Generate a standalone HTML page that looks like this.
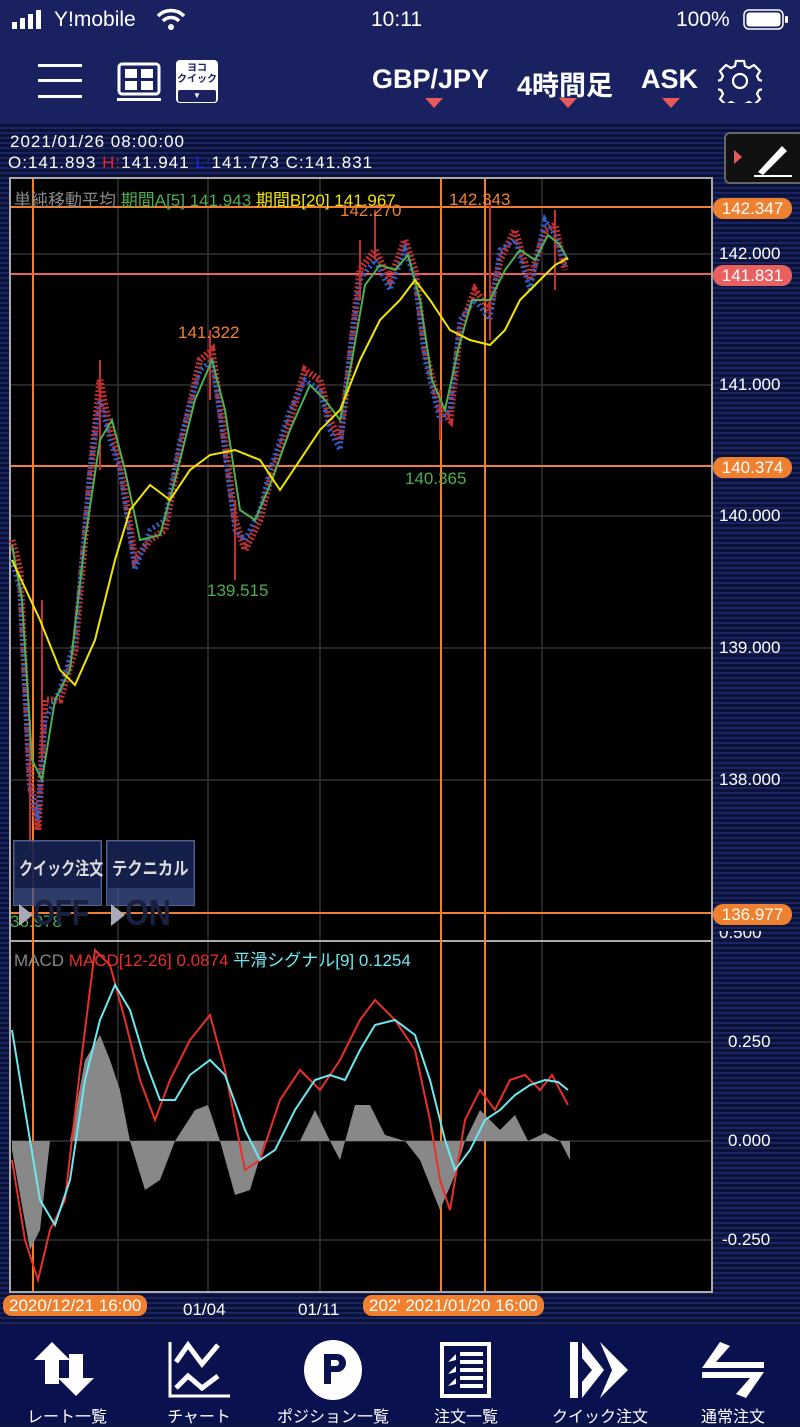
<!DOCTYPE html>
<html><head><meta charset="utf-8">
<style>
*{margin:0;padding:0;box-sizing:border-box}
body{width:800px;height:1422px;overflow:hidden;background:#0d1547;font-family:"Liberation Sans","Noto Sans CJK JP",sans-serif;color:#fff;position:relative}
.stripes{position:absolute;left:0;top:124px;width:800px;height:1202px;background:repeating-linear-gradient(#0b1238 0 3px,#1a2462 3px 5px)}
.top{position:absolute;left:0;top:0;width:800px;height:124px;background:#1a2160}
.abs{position:absolute;white-space:nowrap}
.pill{position:absolute;left:713px;width:79px;height:21px;border-radius:10px;font-size:17px;text-align:center;line-height:21px;color:#fff}
.ax{position:absolute;left:719px;font-size:17px;color:#fff}
.nav{position:absolute;left:0;top:1326px;width:800px;height:96px;background:#0a114f}
.nl{position:absolute;top:1403px;font-size:16px;color:#fff;transform:translateX(-50%);white-space:nowrap}
.dp{position:absolute;top:1295px;height:21px;background:#ee8030;border-radius:9px;font-size:17px;line-height:21px;padding:0 6px;color:#fff}
.cond{display:inline-block;transform-origin:0 0}
</style></head><body>
<div class="top"></div>
<div class="stripes"></div>
<!-- status bar -->
<svg class="abs" style="left:12px;top:10px" width="40" height="20"><rect x="0" y="12" width="5" height="7" fill="#fff"/><rect x="8" y="8" width="5" height="11" fill="#fff"/><rect x="16" y="4" width="5" height="15" fill="#fff"/><rect x="24" y="0" width="5" height="19" fill="#fff"/></svg>
<div class="abs" style="left:54px;top:8px;font-size:21px">Y!mobile</div>
<svg class="abs" style="left:156px;top:8px" width="30" height="22" viewBox="0 0 30 22"><path d="M2 8 A18 18 0 0 1 28 8" stroke="#fff" stroke-width="3.5" fill="none"/><path d="M7 13 A11 11 0 0 1 23 13" stroke="#fff" stroke-width="3.5" fill="none"/><circle cx="15" cy="19" r="3" fill="#fff"/></svg>
<div class="abs" style="left:371px;top:8px;font-size:21px">10:11</div>
<div class="abs" style="left:676px;top:8px;font-size:21px">100%</div>
<svg class="abs" style="left:743px;top:9px" width="46" height="22"><rect x="1" y="1" width="39" height="19" rx="5" stroke="#fff" stroke-width="1.5" fill="none"/><rect x="3.5" y="3.5" width="34" height="14" rx="3" fill="#fff"/><rect x="42" y="7" width="3" height="7" rx="1" fill="#fff"/></svg>
<!-- toolbar -->
<svg class="abs" style="left:38px;top:62px" width="44" height="38"><rect x="0" y="2" width="44" height="3" fill="#fff"/><rect x="0" y="17" width="44" height="3" fill="#fff"/><rect x="0" y="33" width="44" height="3" fill="#fff"/></svg>
<svg class="abs" style="left:117px;top:62px" width="46" height="40"><rect x="2" y="2" width="40" height="30" rx="3" stroke="#fff" stroke-width="3" fill="none"/><rect x="8" y="7" width="12" height="9" fill="#fff"/><rect x="24" y="7" width="12" height="9" fill="#fff"/><rect x="8" y="19" width="12" height="9" fill="#fff"/><rect x="24" y="19" width="12" height="9" fill="#fff"/><rect x="0" y="36" width="44" height="3" fill="#fff"/></svg>
<div class="abs" style="left:176px;top:60px;width:42px;height:43px;background:#fff;border-radius:4px;color:#1a2160;font-size:10px;font-weight:bold;text-align:center;line-height:11px;padding-top:3px">ヨコ<br>クイック<div style="margin:5px 2px 0;background:#1a2160;color:#fff;height:12px;font-size:8px;line-height:12px;border-radius:2px">▼</div></div>
<div class="abs" style="left:372px;top:64px;font-size:27px;font-weight:bold">GBP/JPY</div>
<div class="abs" style="left:517px;top:64px;font-size:27px;font-weight:bold">4時間足</div>
<div class="abs" style="left:641px;top:64px;font-size:27px;font-weight:bold">ASK</div>
<svg class="abs" style="left:424px;top:97px" width="20" height="12"><path d="M1 1H19L10 11Z" fill="#e85a5a"/></svg>
<svg class="abs" style="left:558px;top:97px" width="20" height="12"><path d="M1 1H19L10 11Z" fill="#e85a5a"/></svg>
<svg class="abs" style="left:661px;top:97px" width="20" height="12"><path d="M1 1H19L10 11Z" fill="#e85a5a"/></svg>
<svg class="abs" style="left:718px;top:59px" width="44" height="44" viewBox="0 0 44 44"><g transform="translate(22 22)" stroke="#fff" stroke-width="2.2" fill="none"><path d="M-4-20h8l1 5 4 2 5-3 6 6-3 5 2 4 5 1v8l-5 1-2 4 3 5-6 6-5-3-4 2-1 5h-8l-1-5-4-2-5 3-6-6 3-5-2-4-5-1v-8l5-1 2-4-3-5 6-6 5 3 4-2z"/><circle r="7"/></g></svg>
<!-- OHLC -->
<div class="abs" style="left:10px;top:132px;font-size:17px;letter-spacing:1px">2021/01/26 08:00:00</div>
<div class="abs" style="left:8px;top:153px;font-size:17px;letter-spacing:1px">O:141.893 <span style="color:#e22">H:</span>141.941 <span style="color:#22f">L:</span>141.773 C:141.831</div>
<div class="abs" style="left:724px;top:132px;width:80px;height:52px;background:#111;border:2px solid #666;border-radius:6px"></div>
<svg class="abs" style="left:730px;top:140px" width="66" height="40"><path d="M4 10L12 17L4 24Z" fill="#e85a5a"/><path d="M28 32L52 6L57 11L33 35Z" fill="#fff"/><path d="M24 36H62" stroke="#fff" stroke-width="2"/></svg>
<!-- chart -->
<svg class="abs" style="left:0;top:0" width="800" height="1422">
<rect x="10" y="178" width="702" height="1114" fill="#000" stroke="#aaa" stroke-width="2"/>
<g stroke="#333" stroke-width="1.5">
<path d="M118 179V1291M208 179V1291M320 179V1291M542 179V1291"/>
<path d="M11 254H711M11 385H711M11 516H711M11 648H711M11 780H711M11 1042H711M11 1141H711M11 1240H711"/>
</g>
<path d="M11 941H711" stroke="#aaa" stroke-width="2"/>
<g stroke="#ee8030" stroke-width="2"><path d="M33 179V1291M441 179V1291M485 179V1291"/><path d="M11 207H711M11 466H711M11 913H711"/></g>
<path d="M11 274H711" stroke="#e86060" stroke-width="2"/>
<polyline fill="none" stroke="#c03030" stroke-width="7" stroke-dasharray="2 2" points="12,540 20,570 30,780 38,830 45,700 60,700 75,650 90,480 100,380 110,430 120,460 135,560 150,540 165,530 180,450 200,360 212,350 222,420 235,520 245,550 260,520 270,480 290,420 305,370 320,380 330,420 340,440 350,360 360,270 375,250 390,280 405,240 415,270 425,350 440,410 450,420 460,330 475,290 490,310 500,260 515,230 530,280 545,230 555,225 565,270"/>
<polyline fill="none" stroke="#3060d0" stroke-width="5" stroke-dasharray="2 3" points="12,560 20,590 30,790 38,820 45,720 60,690 75,640 90,470 100,400 110,440 120,470 135,570 150,530 165,520 180,440 200,370 212,360 222,430 235,530 245,540 260,510 270,470 290,410 305,380 320,390 330,430 340,450 350,350 360,280 375,260 390,290 405,250 415,280 425,360 440,420 450,410 460,320 475,300 490,320 500,250 515,240 530,290 545,220 555,235 565,265"/>
<path d="M100 360V470M42 600V760M30 720V850M210 330V400M235 500V580M360 240V300M440 390V440M490 200V340M555 210V290M375 210V260" stroke="#c03030" stroke-width="2"/>
<polyline fill="none" stroke="#4caf50" stroke-width="2" points="12,545 22,600 32,760 42,780 55,700 70,670 85,540 100,440 112,420 125,470 140,540 160,535 175,480 195,400 212,360 225,410 240,510 255,520 270,485 290,430 310,385 325,400 340,420 352,360 365,285 380,265 395,270 408,255 420,300 432,380 445,410 458,350 472,300 490,300 505,270 520,250 535,260 548,235 560,245 568,260"/>
<polyline fill="none" stroke="#f2e600" stroke-width="2" points="12,560 40,620 60,670 75,685 95,640 115,560 130,510 150,485 170,500 190,470 210,455 235,450 260,460 280,490 300,460 320,430 340,410 360,360 380,320 400,300 415,280 430,300 450,330 470,340 490,345 505,330 520,300 540,280 555,265 568,258"/>
<path fill="#888" d="M12,1141 L12,1150 L30,1250 L40,1230 L50,1141 L70,1141 L85,1060 L100,1035 L110,1060 L120,1090 L130,1141 L145,1190 L160,1180 L175,1141 L195,1110 L208,1105 L220,1141 L235,1195 L250,1190 L265,1141 L300,1141 L315,1110 L330,1141 L340,1160 L355,1105 L370,1105 L385,1135 L405,1141 L420,1160 L440,1210 L455,1175 L465,1141 L480,1110 L500,1130 L515,1115 L528,1141 L545,1133 L560,1141 L570,1160 L570,1141 Z"/>
<polyline fill="none" stroke="#e8302a" stroke-width="2" points="12,1160 25,1240 38,1280 50,1230 65,1200 80,1070 95,950 110,965 125,1020 140,1080 155,1120 170,1080 190,1040 210,1015 225,1070 245,1170 260,1160 280,1100 300,1070 320,1090 340,1060 360,1020 375,1000 395,1020 415,1050 430,1120 440,1180 450,1210 465,1120 480,1090 495,1110 510,1080 525,1075 540,1090 552,1075 568,1105"/>
<polyline fill="none" stroke="#6ee8f0" stroke-width="2" points="12,1030 25,1110 40,1200 55,1225 70,1180 85,1080 100,1020 115,985 130,1010 145,1060 160,1100 175,1100 190,1075 210,1060 225,1075 245,1130 260,1160 275,1150 295,1110 315,1080 330,1075 345,1080 360,1050 375,1025 395,1020 415,1035 430,1080 445,1140 455,1170 470,1150 485,1120 500,1110 515,1095 530,1085 545,1080 558,1082 568,1090"/>
</svg>
<!-- chart texts -->
<div class="abs" style="left:14px;top:186px;font-size:17px;color:#888">単純移動平均 <span style="color:#4caf50">期間A[5] 141.943</span> <span style="color:#f2e600">期間B[20] 141.967</span></div>
<div class="abs" style="left:449px;top:190px;font-size:17px;color:#ee8030">142.343</div>
<div class="abs" style="left:340px;top:201px;font-size:17px;color:#ee8030">142.270</div>
<div class="abs" style="left:178px;top:323px;font-size:17px;color:#ee8030">141.322</div>
<div class="abs" style="left:405px;top:469px;font-size:17px;color:#4caf50">140.365</div>
<div class="abs" style="left:207px;top:581px;font-size:17px;color:#4caf50">139.515</div>
<div class="abs" style="left:10px;top:912px;font-size:17px;color:#4caf50">36.978</div>
<div class="abs" style="left:14px;top:946px;font-size:17px;color:#888">MACD <span style="color:#e8302a">MACD[12-26] 0.0874</span> <span style="color:#6ee8f0">平滑シグナル[9] 0.1254</span></div>
<!-- overlay buttons -->
<div class="abs" style="left:13px;top:840px;width:89px;height:66px;background:rgba(60,80,140,.75);border:1px solid #506090"></div>
<div class="abs" style="left:106px;top:840px;width:89px;height:66px;background:rgba(60,80,140,.75);border:1px solid #506090"></div>
<div class="abs" style="left:15px;top:842px;width:85px;height:46px;background:rgba(10,20,60,.7)"></div>
<div class="abs" style="left:108px;top:842px;width:85px;height:46px;background:rgba(10,20,60,.7)"></div>
<div class="abs" style="left:19px;top:855px;font-size:18px;font-weight:bold;color:#ddd"><span class="cond" style="transform:scaleX(.78)">クイック注文</span></div>
<div class="abs" style="left:112px;top:855px;font-size:18px;font-weight:bold;color:#ddd"><span class="cond" style="transform:scaleX(.85)">テクニカル</span></div>
<svg class="abs" style="left:17px;top:902px" width="20" height="26"><path d="M2 2L16 13L2 24Z" fill="#aab"/></svg>
<svg class="abs" style="left:109px;top:902px" width="20" height="26"><path d="M2 2L16 13L2 24Z" fill="#aab"/></svg>
<div class="abs" style="left:33px;top:893px;font-size:36px;font-weight:bold;color:#1a2040;line-height:40px"><span class="cond" style="transform:scaleX(.78)">OFF</span></div>
<div class="abs" style="left:125px;top:893px;font-size:36px;font-weight:bold;color:#1a2040;line-height:40px"><span class="cond" style="transform:scaleX(.85)">ON</span></div>
<!-- right axis -->
<div class="pill" style="top:198px;background:#ee8030">142.347</div>
<div class="pill" style="top:265px;background:#e86060">141.831</div>
<div class="pill" style="top:457px;background:#ee8030">140.374</div>
<div class="pill" style="top:904px;background:#ee8030">136.977</div>
<div class="ax" style="top:244px">142.000</div>
<div class="ax" style="top:375px">141.000</div>
<div class="ax" style="top:506px">140.000</div>
<div class="ax" style="top:638px">139.000</div>
<div class="ax" style="top:770px">138.000</div>
<div class="ax" style="top:931px;height:11px;overflow:hidden"><div style="margin-top:-8px">0.500</div></div>
<div class="ax" style="top:1032px;left:728px">0.250</div>
<div class="ax" style="top:1131px;left:728px">0.000</div>
<div class="ax" style="top:1230px;left:722px">-0.250</div>
<!-- date axis -->
<div class="abs" style="left:183px;top:1300px;font-size:17px">01/04</div>
<div class="abs" style="left:298px;top:1300px;font-size:17px">01/11</div>
<div class="dp" style="left:3px">2020/12/21 16:00</div>
<div class="dp" style="left:363px">202' 2021/01/20 16:00</div>
<!-- bottom nav -->
<div class="nav"></div>
<svg class="abs" style="left:30px;top:1340px" width="70" height="60"><path d="M4 20L22 2L40 20H29V44H15V20Z" fill="#fff"/><path d="M64 38L46 56L28 38H39V14H53V38Z" fill="#fff"/></svg>
<svg class="abs" style="left:166px;top:1340px" width="66" height="60"><path d="M4 2V56H64" stroke="#fff" stroke-width="3" fill="none"/><path d="M10 22L22 5L36 24L52 5" stroke="#fff" stroke-width="5" fill="none"/><path d="M10 48L22 36L36 48L52 36" stroke="#fff" stroke-width="5" fill="none"/></svg>
<svg class="abs" style="left:302px;top:1338px" width="62" height="64"><ellipse cx="31" cy="32" rx="29" ry="30" fill="#fff"/><path d="M22 46V16H35A9 9 0 0 1 35 34H29V46Z" fill="#0a114f"/><path d="M29 22V28H34A3 3 0 0 0 34 22Z" fill="#fff"/></svg>
<svg class="abs" style="left:438px;top:1340px" width="56" height="60"><rect x="2" y="2" width="51" height="56" fill="#fff"/><rect x="6" y="6" width="43" height="48" fill="#0a114f"/><g fill="#fff"><rect x="22" y="12" width="23" height="4"/><rect x="22" y="20" width="23" height="4"/><rect x="22" y="28" width="23" height="4"/><rect x="22" y="36" width="23" height="4"/><rect x="22" y="44" width="23" height="4"/><path d="M10 22L18 14V20Z"/><path d="M10 34L18 26V32Z"/><path d="M10 46L18 38V44Z"/></g></svg>
<svg class="abs" style="left:570px;top:1340px" width="60" height="60"><rect x="0" y="2" width="8" height="56" fill="#fff"/><path d="M12 2L34 30L12 58V42L22 30L12 18Z" fill="#fff"/><path d="M30 2L58 30L30 58L42 30Z" fill="#fff"/></svg>
<svg class="abs" style="left:700px;top:1340px" width="66" height="60"><path d="M20 2L30 6L16 22H64V28H2Z" fill="#fff"/><path d="M46 58L36 54L50 38H2V32H64Z" fill="#fff"/></svg>
<div class="nl" style="left:67px">レート一覧</div>
<div class="nl" style="left:199px">チャート</div>
<div class="nl" style="left:333px">ポジション一覧</div>
<div class="nl" style="left:466px">注文一覧</div>
<div class="nl" style="left:600px">クイック注文</div>
<div class="nl" style="left:733px">通常注文</div>
</body></html>
